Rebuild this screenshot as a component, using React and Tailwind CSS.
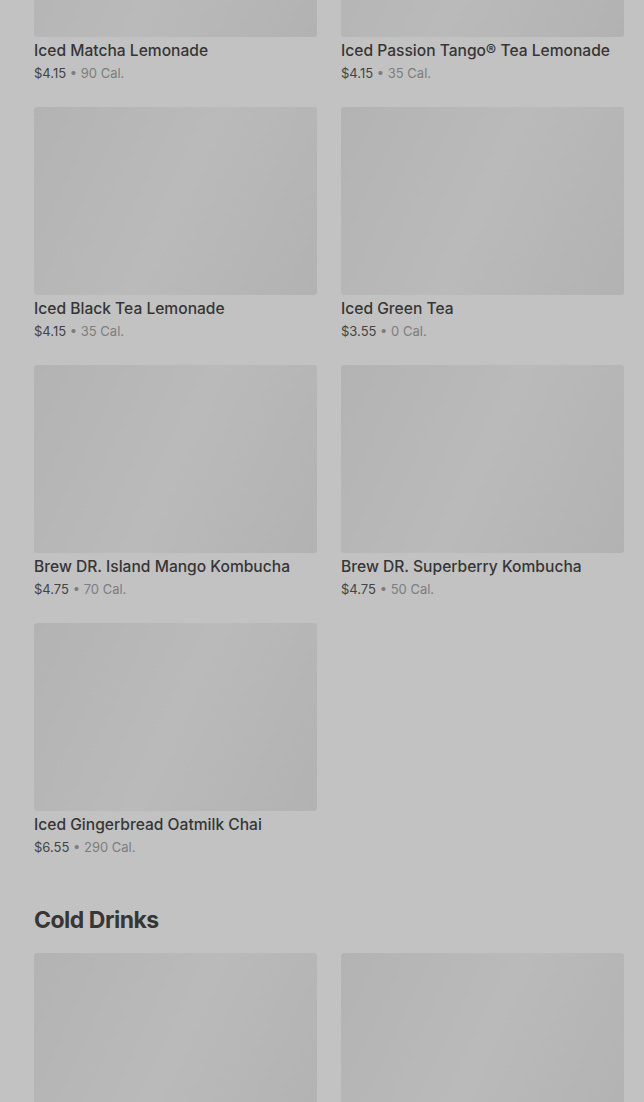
import React from "react";

const teas = [
  { name: "Iced Matcha Lemonade", price: "$4.15", cal: "90 Cal." },
  { name: "Iced Passion Tango® Tea Lemonade", price: "$4.15", cal: "35 Cal." },
  { name: "Iced Black Tea Lemonade", price: "$4.15", cal: "35 Cal." },
  { name: "Iced Green Tea", price: "$3.55", cal: "0 Cal." },
  { name: "Brew DR. Island Mango Kombucha", price: "$4.75", cal: "70 Cal." },
  { name: "Brew DR. Superberry Kombucha", price: "$4.75", cal: "50 Cal." },
  { name: "Iced Gingerbread Oatmilk Chai", price: "$6.55", cal: "290 Cal." },
];

const Thumb = () => (
  <div className="h-[188px] rounded-[3px] bg-linear-115 from-[#b3b3b3] via-[#bababa] to-[#b2b2b2]" />
);

const Item = ({ item }) => (
  <div className="flex flex-col">
    <Thumb />
    <p className="mt-1 text-[15.6px] leading-5 font-medium text-[#363636]">
      {item.name}
    </p>
    <p className="mt-[3px] text-[13px] leading-[18px] text-[#444]">
      {item.price}
      <span className="text-[#7d7d7d]"> • {item.cal}</span>
    </p>
  </div>
);

const App = () => {
  return (
    <div
      className="h-[1102px] overflow-hidden bg-[#c2c2c2] pl-[34px] pr-5"
      style={{ fontFamily: "Inter, 'Noto Sans', sans-serif" }}
    >
      <div className="-mt-[151px] grid grid-cols-2 gap-x-6 gap-y-[25px]">
        {teas.map((item) => (
          <Item key={item.name} item={item} />
        ))}
      </div>

      <h2 className="mt-12 text-[23px] leading-8 font-bold tracking-[-0.5px] text-[#363636]">
        Cold Drinks
      </h2>

      <div className="mt-[17px] grid grid-cols-2 gap-x-6">
        <Thumb />
        <Thumb />
      </div>
    </div>
  );
};

export default App;
